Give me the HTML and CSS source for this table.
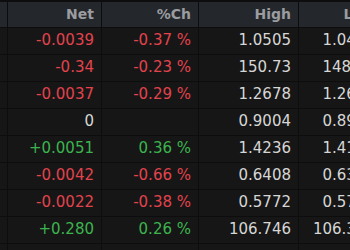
FILE: index.html
```html
<!DOCTYPE html>
<html>
<head>
<meta charset="utf-8">
<link rel="stylesheet" href="styles.css">
</head>
<body>
<div class="quotes">
  <div class="row head">
    <div class="cell"></div>
    <div class="cell">Net</div>
    <div class="cell">%Ch</div>
    <div class="cell">High</div>
    <div class="cell">Low</div>
  </div>
  <div class="row">
    <div class="cell"></div>
    <div class="cell dn">-0.0039</div>
    <div class="cell dn">-0.37 %</div>
    <div class="cell">1.0505</div>
    <div class="cell">1.0462</div>
  </div>
  <div class="row">
    <div class="cell"></div>
    <div class="cell dn">-0.34</div>
    <div class="cell dn">-0.23 %</div>
    <div class="cell">150.73</div>
    <div class="cell">148.85</div>
  </div>
  <div class="row">
    <div class="cell"></div>
    <div class="cell dn">-0.0037</div>
    <div class="cell dn">-0.29 %</div>
    <div class="cell">1.2678</div>
    <div class="cell">1.2631</div>
  </div>
  <div class="row">
    <div class="cell"></div>
    <div class="cell">0</div>
    <div class="cell"></div>
    <div class="cell">0.9004</div>
    <div class="cell">0.8952</div>
  </div>
  <div class="row">
    <div class="cell"></div>
    <div class="cell up">+0.0051</div>
    <div class="cell up">0.36 %</div>
    <div class="cell">1.4236</div>
    <div class="cell">1.4162</div>
  </div>
  <div class="row">
    <div class="cell"></div>
    <div class="cell dn">-0.0042</div>
    <div class="cell dn">-0.66 %</div>
    <div class="cell">0.6408</div>
    <div class="cell">0.6391</div>
  </div>
  <div class="row">
    <div class="cell"></div>
    <div class="cell dn">-0.0022</div>
    <div class="cell dn">-0.38 %</div>
    <div class="cell">0.5772</div>
    <div class="cell">0.5749</div>
  </div>
  <div class="row">
    <div class="cell"></div>
    <div class="cell up">+0.280</div>
    <div class="cell up">0.26 %</div>
    <div class="cell">106.746</div>
    <div class="cell">106.312</div>
  </div>
  <div class="row">
    <div class="cell"></div>
    <div class="cell"></div>
    <div class="cell"></div>
    <div class="cell"></div>
    <div class="cell"></div>
  </div>
</div>
</body>
</html>
```
FILE: styles.css
```css
html, body {
  margin: 0;
  padding: 0;
  background: #0d0d0d;
  overflow: hidden;
}
.quotes {
  display: flex;
  flex-direction: column;
  gap: 1px;
  padding-top: 2px;
  width: 382px;
  background: #0d0d0d;
  font-family: "DejaVu Sans", sans-serif;
  font-size: 15px;
  color: #d6d6d6;
}
.row {
  display: grid;
  grid-template-columns: 7px 93px 96px 99px 83px;
  gap: 1px;
  height: 26px;
}
.row.head {
  height: 25px;
}
.cell {
  background: #161616;
  display: flex;
  align-items: center;
  justify-content: flex-end;
  padding-right: 7px;
  padding-bottom: 2px;
  white-space: nowrap;
  overflow: hidden;
}
.cell:first-child {
  padding: 0;
}
.head .cell {
  background: #24272c;
  color: #9a9c9f;
  font-weight: bold;
  font-size: 14px;
  padding-bottom: 1px;
}
.dn {
  color: #e2434d;
}
.up {
  color: #3cb44e;
}
```
